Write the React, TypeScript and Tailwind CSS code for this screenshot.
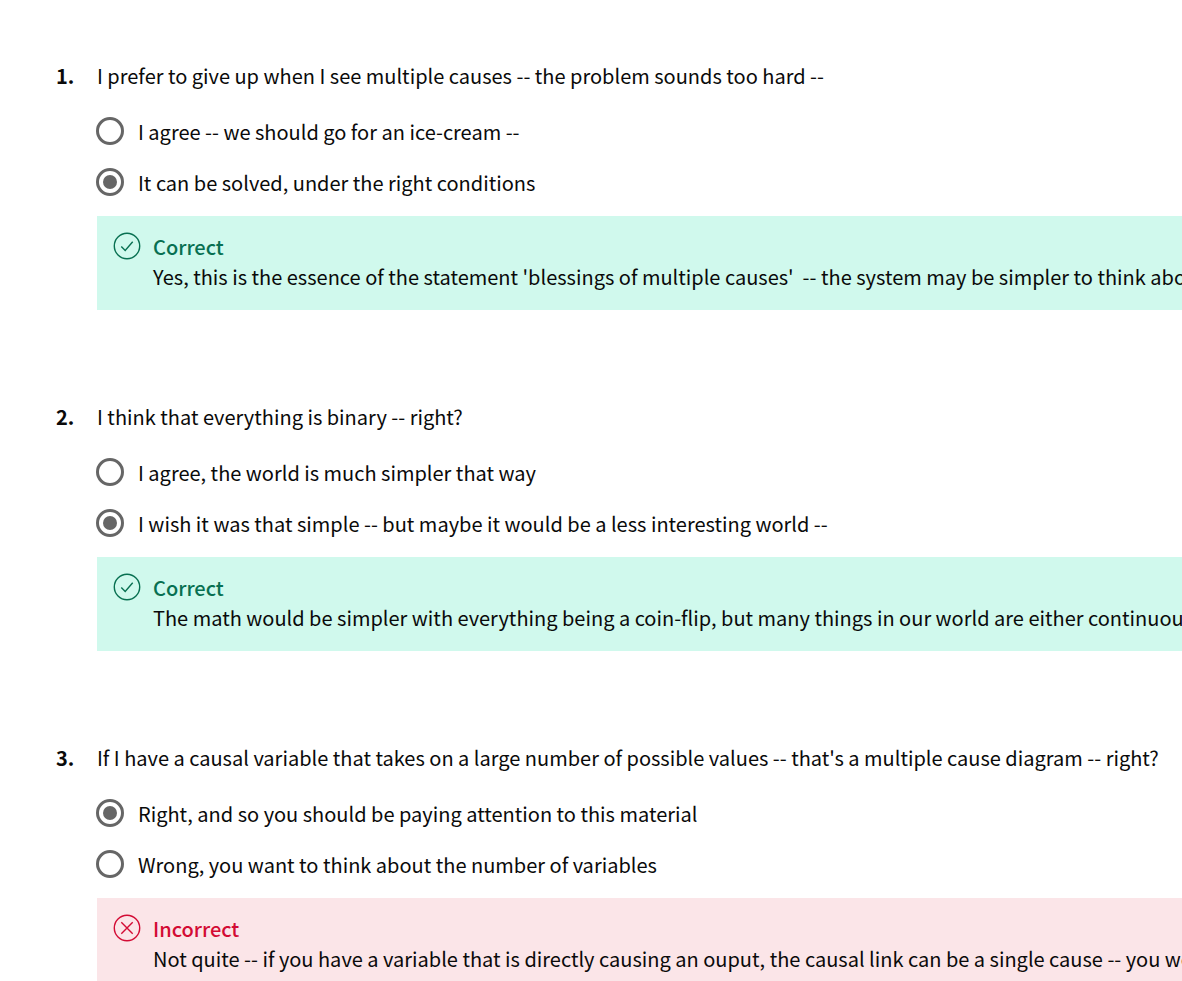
import React from 'react';

type Question = {
  prompt: string;
  options: string[];
  selected: number;
  correct: boolean;
  feedback: string;
};

const questions: Question[] = [
  {
    prompt: 'I prefer to give up when I see multiple causes -- the problem sounds too hard --',
    options: [
      'I agree -- we should go for an ice-cream --',
      'It can be solved, under the right conditions',
    ],
    selected: 1,
    correct: true,
    feedback:
      "Yes, this is the essence of the statement 'blessings of multiple causes'\u00a0 -- the system may be simpler to think abo",
  },
  {
    prompt: 'I think that everything is binary -- right?',
    options: [
      'I agree, the world is much simpler that way',
      'I wish it was that simple -- but maybe it would be a less interesting world --',
    ],
    selected: 1,
    correct: true,
    feedback:
      'The math would be simpler with everything being a coin-flip, but many things in our world are either continuou',
  },
  {
    prompt:
      "If I have a causal variable that takes on a large number of possible values -- that's a multiple cause diagram -- right?",
    options: [
      'Right, and so you should be paying attention to this material',
      'Wrong, you want to think about the number of variables',
    ],
    selected: 0,
    correct: false,
    feedback:
      'Not quite -- if you have a variable that is directly causing an ouput, the causal link can be a single cause -- you wo',
  },
];

function StatusIcon({ correct }: { correct: boolean }) {
  return (
    <svg
      viewBox="0 0 28 28"
      className="size-7 shrink-0"
      fill="none"
      stroke="currentColor"
      strokeWidth="1.4"
      aria-hidden="true"
    >
      <circle cx="14" cy="14" r="12.7" />
      {correct ? <path d="M8.3 14.4l3.9 4 7.5-8.6" /> : <path d="M8.3 8.3l11.4 11.4M19.7 8.3L8.3 19.7" />}
    </svg>
  );
}

function Feedback({ correct, text }: { correct: boolean; text: string }) {
  return (
    <div className={`mt-2 flex gap-3 pt-4 pb-[18px] pl-4 leading-[30px] ${correct ? 'bg-[#d0f9ed]' : 'bg-[#fbe5e8]'}`}>
      <div className={correct ? 'text-[#087051]' : 'text-[#d30b34]'}>
        <StatusIcon correct={correct} />
      </div>
      <div>
        <p className={`font-medium ${correct ? 'text-[#087051]' : 'text-[#d30b34]'}`}>
          {correct ? 'Correct' : 'Incorrect'}
        </p>
        <p>{text}</p>
      </div>
    </div>
  );
}

export default function App() {
  return (
    <main className="overflow-hidden bg-white pt-[60px] pl-14 font-['Noto_Sans_CJK_SC',sans-serif] text-[20px] leading-[31px] whitespace-nowrap text-[#0a0a0a]">
      <form className="flex flex-col gap-[91px]">
        {questions.map((question, q) => (
          <div key={question.prompt} className="flex">
            <div className="w-[41px] shrink-0 font-bold">{q + 1}.</div>
            <fieldset className="min-w-0 flex-1">
              <legend className="mb-[15px]">{question.prompt}</legend>
              {question.options.map((option, o) => (
                <label key={option} className="flex h-[51px] items-center gap-[14px]">
                  <input
                    type="radio"
                    name={`question-${q}`}
                    defaultChecked={question.selected === o}
                    className="mb-0.5 -ml-px grid size-7 shrink-0 appearance-none place-items-center rounded-full border-3 border-[#666666] bg-white before:size-[14px] before:rounded-full checked:before:bg-[#666666]"
                  />
                  <span>{option}</span>
                </label>
              ))}
              <Feedback correct={question.correct} text={question.feedback} />
            </fieldset>
          </div>
        ))}
      </form>
    </main>
  );
}
